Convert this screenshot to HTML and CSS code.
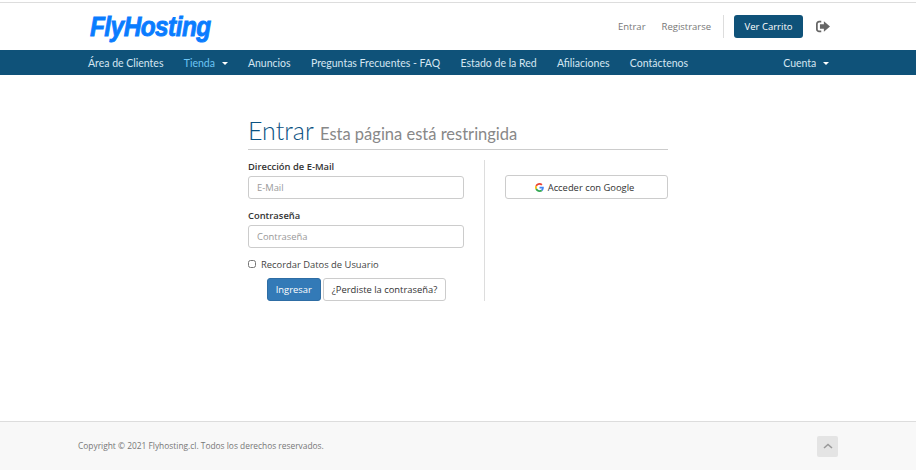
FILE: index.html
```html
<!DOCTYPE html>
<html lang="en">
<head>
  <meta charset="UTF-8">
  <title>FlyHosting - Entrar</title>
  <link rel="stylesheet" href="styles.css">
</head>
<body>
  <header class="topbar">
    <a class="logo" href="#">FlyHosting</a>
    <div class="top-links">
      <a href="#">Entrar</a>
      <a href="#">Registrarse</a>
      <span class="top-divider"></span>
      <a class="cart-btn" href="#">Ver Carrito</a>
      <svg class="logout-icon" viewBox="0 0 16 14" width="14" height="13">
        <path d="M6 1.500H3.500A2.500 2.500 0 0 0 1 4v6a2.500 2.500 0 0 0 2.500 2.500H6" fill="none" stroke="#666" stroke-width="2"/>
        <path d="M9 1 16 7l-7 6V9.500H4.500v-5H9z" fill="#666"/>
      </svg>
    </div>
  </header>

  <nav class="mainnav">
    <ul class="nav-left">
      <li><a href="#">Área de Clientes</a></li>
      <li><a class="active" href="#">Tienda <span class="caret"></span></a></li>
      <li><a href="#">Anuncios</a></li>
      <li><a href="#">Preguntas Frecuentes - FAQ</a></li>
      <li><a href="#">Estado de la Red</a></li>
      <li><a href="#">Afiliaciones</a></li>
      <li><a href="#">Contáctenos</a></li>
    </ul>
    <a class="nav-right" href="#">Cuenta <span class="caret"></span></a>
  </nav>

  <main class="content">
    <section class="login">
      <h1 class="page-title">Entrar <small>Esta página está restringida</small></h1>
      <div class="login-cols">
        <form class="login-form">
          <label class="field-label" for="email">Dirección de E-Mail</label>
          <input class="field" id="email" type="text" placeholder="E-Mail">
          <label class="field-label" for="pass">Contraseña</label>
          <input class="field" id="pass" type="password" placeholder="Contraseña">
          <label class="remember"><input type="checkbox"> Recordar Datos de Usuario</label>
          <div class="form-actions">
            <button class="btn btn-primary" type="button">Ingresar</button>
            <button class="btn" type="button">¿Perdiste la contraseña?</button>
          </div>
        </form>
        <div class="login-social">
          <button class="btn btn-google" type="button">
            <svg viewBox="0 0 48 48" width="9" height="9">
              <path fill="#EA4335" d="M24 9.500c3.500 0 6.700 1.200 9.200 3.600l6.900-6.900C35.900 2.400 30.500 0 24 0 14.600 0 6.500 5.400 2.600 13.200l8 6.200C12.400 13.700 17.700 9.500 24 9.500z"/>
              <path fill="#4285F4" d="M47 24.500c0-1.600-.1-3.100-.4-4.500H24v9h12.900c-.6 3-2.200 5.500-4.700 7.200l7.700 6C44.400 37.900 47 31.800 47 24.500z"/>
              <path fill="#FBBC05" d="M10.600 28.600c-.5-1.400-.8-3-.8-4.600s.3-3.200.8-4.600l-8-6.200C.9 16.500 0 20.100 0 24s.9 7.500 2.600 10.800z"/>
              <path fill="#34A853" d="M24 48c6.500 0 11.900-2.100 15.900-5.800l-7.700-6c-2.200 1.500-4.900 2.300-8.200 2.300-6.300 0-11.600-4.200-13.400-9.900l-8 6.200C6.500 42.600 14.600 48 24 48z"/>
            </svg>
            Acceder con Google
          </button>
        </div>
      </div>
    </section>
  </main>

  <footer class="footer">
    <p>Copyright © 2021 Flyhosting.cl. Todos los derechos reservados.</p>
    <a class="back-top" href="#">
      <svg viewBox="0 0 10 6" width="10" height="6">
        <path d="M1 5 5 1.500 9 5" fill="none" stroke="#999" stroke-width="1.600"/>
      </svg>
    </a>
  </footer>
</body>
</html>
```

FILE: styles.css
```css
* {
  box-sizing: border-box;
}

html, body {
  height: 100%;
}

body {
  margin: 0;
  display: flex;
  flex-direction: column;
  font-family: "Open Sans", sans-serif;
  font-size: 9.4px;
  color: #333;
  background-color: #fff;
}

a {
  text-decoration: none;
}

.topbar {
  height: 48px;
  margin-top: 2px;
  border-top: 1px solid #ddd;
  padding: 0 86px 0 90px;
  display: flex;
  align-items: center;
  justify-content: space-between;
  flex-shrink: 0;
}

.logo {
  font-family: "Liberation Sans", sans-serif;
  font-size: 28px;
  font-weight: bold;
  font-style: italic;
  color: #0a7cff;
  -webkit-text-stroke: 0.9px #0a7cff;
  letter-spacing: -0.6px;
  transform: scaleX(0.87);
  transform-origin: left center;
}

.top-links {
  display: flex;
  align-items: center;
  font-size: 9.5px;
}

.top-links a {
  color: #777;
  margin-right: 16px;
}

.top-divider {
  width: 1px;
  height: 23px;
  background-color: #ddd;
  margin: 0 10px 0 -4px;
}

.top-links .cart-btn {
  background-color: #0f5279;
  color: #fff;
  border-radius: 3px;
  padding: 0 10.5px;
  height: 23px;
  line-height: 23px;
  margin-right: 13px;
}

.logout-icon {
  display: block;
}

.mainnav {
  height: 25px;
  background-color: #0f5279;
  padding: 0 87px 0 88px;
  display: flex;
  align-items: center;
  justify-content: space-between;
  flex-shrink: 0;
  font-family: "Lato", sans-serif;
  font-size: 10.5px;
}

.nav-left {
  display: flex;
  gap: 20.3px;
  list-style: none;
  margin: 0;
  padding: 0;
}

.mainnav a {
  color: #d5e6f2;
}

.mainnav a.active {
  color: #6cc5f5;
}

.caret {
  display: inline-block;
  margin-left: 4px;
  vertical-align: middle;
  border-top: 3px solid #fff;
  border-left: 3px solid transparent;
  border-right: 3px solid transparent;
}

.content {
  flex: 1;
  display: flex;
  justify-content: center;
}

.login {
  width: 420px;
  padding-top: 40px;
}

.page-title {
  margin: 0 0 10px;
  border-bottom: 1px solid #ccc;
  font-family: "Lato", sans-serif;
  font-size: 25px;
  font-weight: 300;
  line-height: 30px;
  color: #0a5282;
}

.page-title small {
  font-size: 16.5px;
  font-weight: 400;
  color: #888;
}

.login-cols {
  display: flex;
}

.login-form {
  width: 237px;
  padding-right: 20px;
  border-right: 1px solid #ddd;
}

.field-label {
  display: block;
  font-weight: 600;
  line-height: 14px;
  margin-bottom: 2px;
}

.field {
  display: block;
  width: 100%;
  height: 23px;
  margin-bottom: 10px;
  padding: 0 8px;
  border: 1px solid #ccc;
  border-radius: 3px;
  font-family: inherit;
  font-size: 9.4px;
}

.field::placeholder {
  color: #999;
}

.remember {
  display: flex;
  align-items: center;
  gap: 5px;
  height: 14px;
  margin-top: -1px;
  margin-bottom: 7px;
  color: #444;
}

.remember input {
  width: 8px;
  height: 8px;
  margin: 0;
}

.form-actions {
  display: flex;
  justify-content: center;
  gap: 2px;
  padding-left: 1px;
}

.btn {
  height: 23px;
  padding: 0 8px;
  border: 1px solid #ccc;
  border-radius: 3px;
  background-color: #fff;
  color: #333;
  font-family: inherit;
  font-size: 9.4px;
}

.btn-primary {
  background-color: #337ab7;
  border-color: #2e6da4;
  color: #fff;
}

.login-social {
  flex: 1;
  padding: 15px 0 0 20px;
}

.btn-google {
  width: 100%;
  height: 24px;
  padding-right: 12px;
  display: flex;
  align-items: center;
  justify-content: center;
  gap: 4px;
}

.footer {
  height: 49px;
  flex-shrink: 0;
  border-top: 1px solid #ddd;
  background-color: #f8f8f8;
  padding: 0 78px;
  display: flex;
  align-items: center;
  justify-content: space-between;
  color: #777;
  font-size: 8.4px;
}

.footer p {
  margin: -2px 0 0;
}

.back-top {
  width: 21px;
  height: 21px;
  border-radius: 2px;
  background-color: #e4e4e4;
  display: flex;
  align-items: center;
  justify-content: center;
}
```
